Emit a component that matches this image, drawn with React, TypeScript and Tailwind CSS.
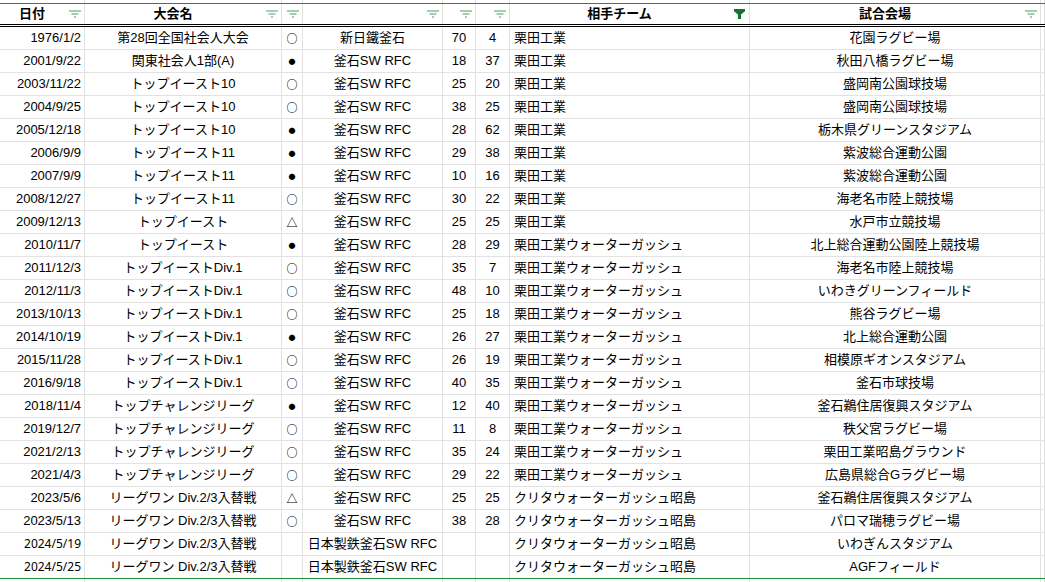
import React from "react";

type Row = [string, string, string, string, string, string, string, string];

const rows: Row[] = [
  ["1976/1/2", "第28回全国社会人大会", "○", "新日鐵釜石", "70", "4", "栗田工業", "花園ラグビー場"],
  ["2001/9/22", "関東社会人1部(A)", "●", "釜石SW RFC", "18", "37", "栗田工業", "秋田八橋ラグビー場"],
  ["2003/11/22", "トップイースト10", "○", "釜石SW RFC", "25", "20", "栗田工業", "盛岡南公園球技場"],
  ["2004/9/25", "トップイースト10", "○", "釜石SW RFC", "38", "25", "栗田工業", "盛岡南公園球技場"],
  ["2005/12/18", "トップイースト10", "●", "釜石SW RFC", "28", "62", "栗田工業", "栃木県グリーンスタジアム"],
  ["2006/9/9", "トップイースト11", "●", "釜石SW RFC", "29", "38", "栗田工業", "紫波総合運動公園"],
  ["2007/9/9", "トップイースト11", "●", "釜石SW RFC", "10", "16", "栗田工業", "紫波総合運動公園"],
  ["2008/12/27", "トップイースト11", "○", "釜石SW RFC", "30", "22", "栗田工業", "海老名市陸上競技場"],
  ["2009/12/13", "トップイースト", "△", "釜石SW RFC", "25", "25", "栗田工業", "水戸市立競技場"],
  ["2010/11/7", "トップイースト", "●", "釜石SW RFC", "28", "29", "栗田工業ウォーターガッシュ", "北上総合運動公園陸上競技場"],
  ["2011/12/3", "トップイーストDiv.1", "○", "釜石SW RFC", "35", "7", "栗田工業ウォーターガッシュ", "海老名市陸上競技場"],
  ["2012/11/3", "トップイーストDiv.1", "○", "釜石SW RFC", "48", "10", "栗田工業ウォーターガッシュ", "いわきグリーンフィールド"],
  ["2013/10/13", "トップイーストDiv.1", "○", "釜石SW RFC", "25", "18", "栗田工業ウォーターガッシュ", "熊谷ラグビー場"],
  ["2014/10/19", "トップイーストDiv.1", "●", "釜石SW RFC", "26", "27", "栗田工業ウォーターガッシュ", "北上総合運動公園"],
  ["2015/11/28", "トップイーストDiv.1", "○", "釜石SW RFC", "26", "19", "栗田工業ウォーターガッシュ", "相模原ギオンスタジアム"],
  ["2016/9/18", "トップイーストDiv.1", "○", "釜石SW RFC", "40", "35", "栗田工業ウォーターガッシュ", "釜石市球技場"],
  ["2018/11/4", "トップチャレンジリーグ", "●", "釜石SW RFC", "12", "40", "栗田工業ウォーターガッシュ", "釜石鵜住居復興スタジアム"],
  ["2019/12/7", "トップチャレンジリーグ", "○", "釜石SW RFC", "11", "8", "栗田工業ウォーターガッシュ", "秩父宮ラグビー場"],
  ["2021/2/13", "トップチャレンジリーグ", "○", "釜石SW RFC", "35", "24", "栗田工業ウォーターガッシュ", "栗田工業昭島グラウンド"],
  ["2021/4/3", "トップチャレンジリーグ", "○", "釜石SW RFC", "29", "22", "栗田工業ウォーターガッシュ", "広島県総合Gラグビー場"],
  ["2023/5/6", "リーグワン Div.2/3入替戦", "△", "釜石SW RFC", "25", "25", "クリタウォーターガッシュ昭島", "釜石鵜住居復興スタジアム"],
  ["2023/5/13", "リーグワン Div.2/3入替戦", "○", "釜石SW RFC", "38", "28", "クリタウォーターガッシュ昭島", "パロマ瑞穂ラグビー場"],
  ["2024/5/19", "リーグワン Div.2/3入替戦", "", "日本製鉄釜石SW RFC", "", "", "クリタウォーターガッシュ昭島", "いわぎんスタジアム"],
  ["2024/5/25", "リーグワン Div.2/3入替戦", "", "日本製鉄釜石SW RFC", "", "", "クリタウォーターガッシュ昭島", "AGFフィールド"],
];

const grid = "grid grid-cols-[85px_197px_21px_140px_33px_34px_240px_291px_1fr]";
const cell = "border-r border-[#e2e2e2] flex items-center overflow-hidden whitespace-nowrap";

const FilterIcon = () => (
  <svg width="12" height="8" viewBox="0 0 12 8" className="absolute right-[3px] top-1/2 -translate-y-1/2">
    <path d="M0 1h12M2.5 4h7M5 7h2" stroke="#4a9e63" strokeWidth="1.2" />
  </svg>
);

const FunnelIcon = () => (
  <svg width="11" height="10" viewBox="0 0 11 10" className="absolute right-[4px] top-1/2 -translate-y-1/2">
    <path d="M0 0h11v2.2L7 5.6V10H4V5.6L0 2.2z" fill="#137333" />
  </svg>
);

const Mark = ({ m }: { m: string }) => {
  if (m === "●") return <span className="text-[7px] leading-none font-[family-name:'Noto_Sans_CJK_JP',sans-serif]">●</span>;
  if (m === "") return null;
  return <span className="text-[11px] font-bold font-[family-name:'Noto_Sans_CJK_JP',sans-serif]">{m}</span>;
};

const Header = ({ label, icon = "filter" }: { label?: string; icon?: "filter" | "funnel" }) => (
  <div className={`${cell} relative justify-center pr-[20px] font-bold`}>
    {label}
    {icon === "filter" ? <FilterIcon /> : <FunnelIcon />}
  </div>
);

export default function App() {
  return (
    <div className="w-[1045px] h-[582px] overflow-hidden bg-white text-[13px] text-black font-[family-name:'Liberation_Sans','Noto_Sans_CJK_JP',sans-serif]">
      {/* sliver of the row above */}
      <div className={`${grid} h-[3px]`}>
        {Array.from({ length: 9 }).map((_, i) => (
          <div key={i} className={cell} />
        ))}
      </div>
      <div className="h-px bg-[#1e8e3e]" />
      <div className={`${grid} h-[23px] border-b-[3px] border-double border-black`}>
        <Header label="日付" />
        <Header label="大会名" />
        <Header />
        <Header />
        <Header />
        <Header />
        <Header label="相手チーム" icon="funnel" />
        <Header label="試合会場" />
        <div className={cell} />
      </div>
      {rows.map((r, i) => {
        const last = i === rows.length - 1;
        const newer = r[0].startsWith("2024");
        return (
          <div key={i} className={`${grid} h-[23px] border-b ${last ? "border-[#1e8e3e]" : "border-[#e2e2e2]"}`}>
            <div className={`${cell} justify-end pr-[3px] ${newer ? "text-[12px] font-[family-name:'Noto_Sans',sans-serif]" : ""}`}>{r[0]}</div>
            <div className={`${cell} justify-center`}>{r[1]}</div>
            <div className={`${cell} justify-center`}>
              <Mark m={r[2]} />
            </div>
            <div className={`${cell} justify-center`}>{r[3]}</div>
            <div className={`${cell} justify-center`}>{r[4]}</div>
            <div className={`${cell} justify-center`}>{r[5]}</div>
            <div className={`${cell} pl-[4px]`}>{r[6]}</div>
            <div className={`${cell} justify-center`}>{r[7]}</div>
            <div className={cell} />
          </div>
        );
      })}
      <div className={`${grid} h-[3px]`}>
        {Array.from({ length: 9 }).map((_, i) => (
          <div key={i} className={cell} />
        ))}
      </div>
    </div>
  );
}
